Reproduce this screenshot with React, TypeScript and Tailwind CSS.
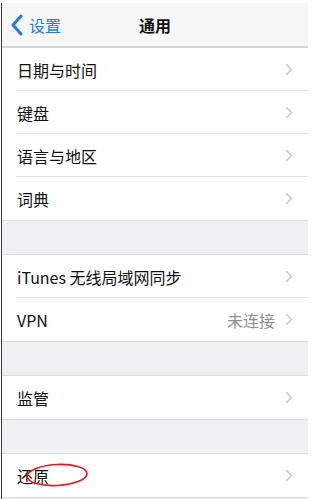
import React from 'react';

type Row = { label: string; detail?: string; mark?: boolean };

const groups: Row[][] = [
  [{ label: '日期与时间' }, { label: '键盘' }, { label: '语言与地区' }, { label: '词典' }],
  [{ label: 'iTunes 无线局域网同步' }, { label: 'VPN', detail: '未连接' }],
  [{ label: '监管' }],
  [{ label: '还原', mark: true }],
];

function Chevron() {
  return (
    <svg width="8" height="13" viewBox="0 0 8 13" className="shrink-0">
      <path d="M1.5 1.5 L6.5 6.5 L1.5 11.5" fill="none" stroke="#c7c7cc" strokeWidth="1.6" strokeLinecap="round" strokeLinejoin="round" />
    </svg>
  );
}

function Cell({ row, last }: { row: Row; last: boolean }) {
  return (
    <div className="relative flex h-[43px] items-center bg-white pl-[15px] pr-[15px]">
      <span className="flex-1 text-[16px] text-[#111]">{row.label}</span>
      {row.detail && <span className="mr-[10px] text-[16px] text-[#8e8e93]">{row.detail}</span>}
      <Chevron />
      {!last && <div className="absolute bottom-0 left-[14px] right-0 h-px bg-[#e3e3e6]" />}
      {row.mark && (
        <svg className="absolute left-[23px] top-[8px]" width="64" height="26" viewBox="0 0 64 26">
          <ellipse cx="32" cy="13" rx="30" ry="10.5" fill="none" stroke="#e8141b" strokeWidth="1.6" transform="rotate(-3 32 13)" />
        </svg>
      )}
    </div>
  );
}

export default function App() {
  return (
    <div
      className="h-[499px] w-[312px] overflow-hidden bg-white pl-px pt-[3px]"
      style={{ fontFamily: '"Noto Sans CJK SC", "Liberation Sans", sans-serif' }}
    >
      <div className="h-full w-[307px] border-l border-[#3a3a3a] bg-[#efeff4]">
        <div className="flex h-[45px] items-center border-b-2 border-[#d6d6da] bg-[#f7f7f7]">
          <div className="flex w-[100px] items-center pl-[8px] text-[#1a7cf5]">
            <svg width="14" height="22" viewBox="0 0 14 22">
              <path d="M11 2 L3 11 L11 20" fill="none" stroke="#1a7cf5" strokeWidth="3" strokeLinecap="round" strokeLinejoin="round" />
            </svg>
            <span className="ml-[5px] text-[16px]">设置</span>
          </div>
          <div className="flex-1 pr-[100px] text-center text-[16px] font-bold text-[#111]">通用</div>
        </div>
        {groups.map((g, gi) => (
          <div key={gi} className={gi === 0 ? '' : 'mt-[33px]'}>
            <div className={gi === 0 ? 'border-b border-[#dcdce0]' : 'border-y border-[#dcdce0]'}>
              {g.map((r, ri) => (
                <Cell key={r.label} row={r} last={ri === g.length - 1} />
              ))}
            </div>
          </div>
        ))}
      </div>
    </div>
  );
}
